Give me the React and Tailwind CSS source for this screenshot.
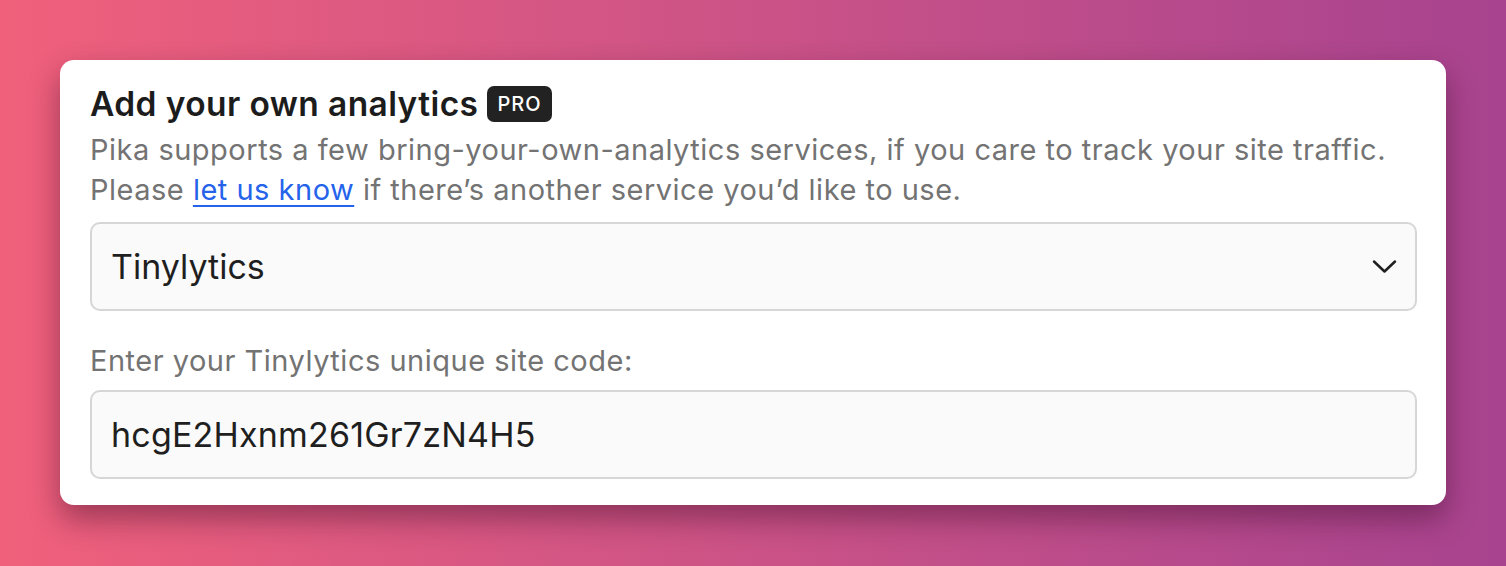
import React, { useState } from "react";

const Chevron = () => (
  <svg width="25" height="15" viewBox="0 0 25 15" fill="none" className="shrink-0">
    <path d="M2 2.5l10.5 10L23 2.5" stroke="#1f1f1f" strokeWidth="2.5" strokeLinecap="round" strokeLinejoin="round" />
  </svg>
);

const App = () => {
  const [service, setService] = useState("Tinylytics");
  const [code, setCode] = useState("hcgE2Hxnm261Gr7zN4H5");

  return (
    <div
      className="w-[1506px] h-[566px] bg-gradient-to-r from-[#f0607b] to-[#a8438f] pt-[60px] px-[60px]"
      style={{ fontFamily: "Inter, 'Noto Sans', sans-serif" }}
    >
      <div className="bg-white rounded-[14px] shadow-[0_14px_30px_rgba(60,10,40,0.45)] pl-[30px] pr-[29px] pt-[24px] pb-[26px]">
        <div className="flex items-center gap-[9px] h-[40px]">
          <h2 className="text-[33.5px] leading-[40px] font-semibold text-[#1c1c1c] tracking-[0.4px]">
            Add your own analytics
          </h2>
          <span className="bg-[#222222] text-white text-[20px] leading-[36px] h-[36px] px-[10px] rounded-[7px] font-medium tracking-[1px]">
            PRO
          </span>
        </div>
        <p className="mt-[6px] text-[29px] leading-[40px] text-[#737373] tracking-[0.5px]">
          Pika supports a few bring-your-own-analytics services, if you care to track your site traffic.
          <br />
          Please{" "}
          <a href="#" className="text-[#2563eb] underline underline-offset-[5px] decoration-[2px]">
            let us know
          </a>{" "}
          if there’s another service you’d like to use.
        </p>
        <div className="mt-[12px] h-[89px] border-2 border-[#d6d6d6] bg-[#fafafa] rounded-[10px] flex items-center justify-between pl-[19px] pr-[18px]">
          <span className="text-[34px] text-[#1f1f1f]">{service}</span>
          <Chevron />
        </div>
        <label className="block mt-[30px] text-[29px] leading-[40px] text-[#737373] tracking-[0.5px]">
          Enter your {service} unique site code:
        </label>
        <input
          value={code}
          onChange={(e) => setCode(e.target.value)}
          className="block mt-[9px] w-full h-[89px] border-2 border-[#d6d6d6] bg-[#fafafa] rounded-[10px] px-[19px] text-[34px] tracking-[0.2px] text-[#1f1f1f] outline-none"
        />
      </div>
    </div>
  );
};

export default App;
